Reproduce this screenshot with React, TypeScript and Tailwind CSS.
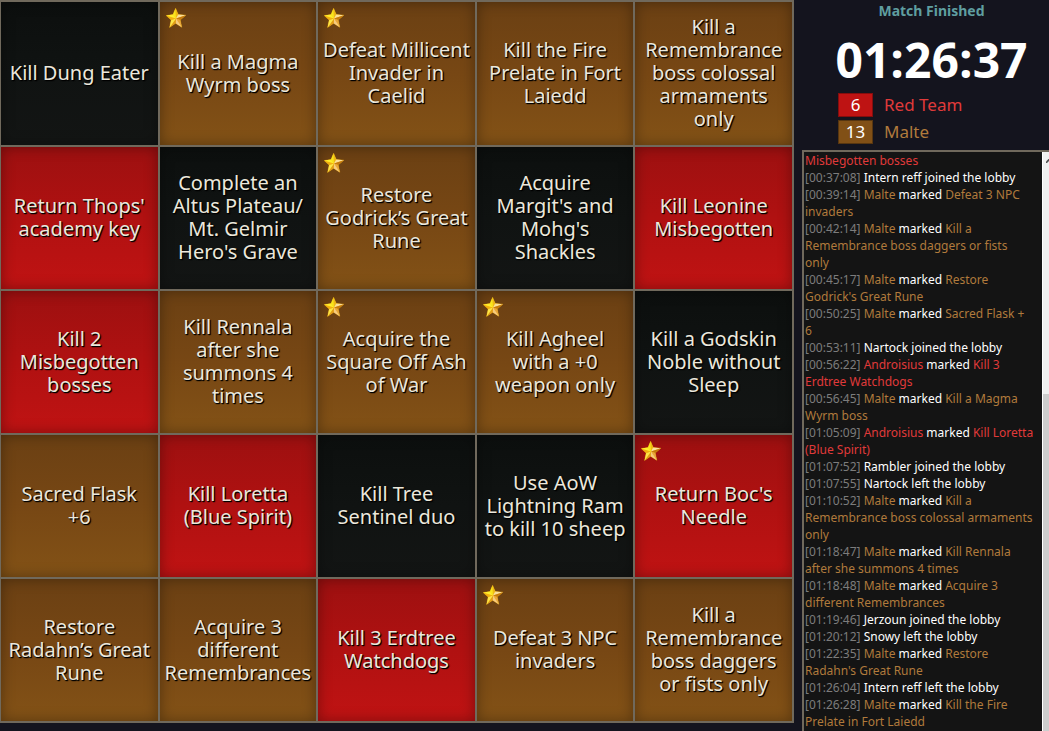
import React, { Fragment } from "react";

type Color = "red" | "brown" | "none";

interface Goal {
  text: string;
  color: Color;
  starred?: boolean;
}

const goals: Goal[] = [
  { text: "Kill Dung Eater", color: "none" },
  { text: "Kill a Magma\nWyrm boss", color: "brown", starred: true },
  { text: "Defeat Millicent\nInvader in\nCaelid", color: "brown", starred: true },
  { text: "Kill the Fire\nPrelate in Fort\nLaiedd", color: "brown" },
  { text: "Kill a\nRemembrance\nboss colossal\narmaments\nonly", color: "brown" },
  { text: "Return Thops'\nacademy key", color: "red" },
  { text: "Complete an\nAltus Plateau/\nMt. Gelmir\nHero's Grave", color: "none" },
  { text: "Restore\nGodrick’s Great\nRune", color: "brown", starred: true },
  { text: "Acquire\nMargit's and\nMohg's\nShackles", color: "none" },
  { text: "Kill Leonine\nMisbegotten", color: "red" },
  { text: "Kill 2\nMisbegotten\nbosses", color: "red" },
  { text: "Kill Rennala\nafter she\nsummons 4\ntimes", color: "brown" },
  { text: "Acquire the\nSquare Off Ash\nof War", color: "brown", starred: true },
  { text: "Kill Agheel\nwith a +0\nweapon only", color: "brown", starred: true },
  { text: "Kill a Godskin\nNoble without\nSleep", color: "none" },
  { text: "Sacred Flask\n+6", color: "brown" },
  { text: "Kill Loretta\n(Blue Spirit)", color: "red" },
  { text: "Kill Tree\nSentinel duo", color: "none" },
  { text: "Use AoW\nLightning Ram\nto kill 10 sheep", color: "none" },
  { text: "Return Boc's\nNeedle", color: "red", starred: true },
  { text: "Restore\nRadahn’s Great\nRune", color: "brown" },
  { text: "Acquire 3\ndifferent\nRemembrances", color: "brown" },
  { text: "Kill 3 Erdtree\nWatchdogs", color: "red" },
  { text: "Defeat 3 NPC\ninvaders", color: "brown", starred: true },
  { text: "Kill a\nRemembrance\nboss daggers\nor fists only", color: "brown" },
];

const cellColors: Record<Color, string> = {
  red: "from-[#9d1010] via-[#b01111] to-[#c01313]",
  brown: "from-[#6b4013] via-[#774714] to-[#835216]",
  none: "from-[#0c0f0e] via-[#101312] to-[#131514]",
};

const textColors: Record<Color, string> = {
  red: "text-[#e03a3a]",
  brown: "text-[#b07a3c]",
  none: "text-white",
};

interface LogEntry {
  time?: string;
  player?: string;
  color: Color;
  action?: string;
  goal?: string;
}

const log: LogEntry[] = [
  { color: "red", goal: "Misbegotten bosses" },
  { time: "00:37:08", color: "none", action: "Intern reff joined the lobby" },
  { time: "00:39:14", player: "Malte", color: "brown", goal: "Defeat 3 NPC\ninvaders" },
  { time: "00:42:14", player: "Malte", color: "brown", goal: "Kill a\nRemembrance boss daggers or fists\nonly" },
  { time: "00:45:17", player: "Malte", color: "brown", goal: "Restore\nGodrick's Great Rune" },
  { time: "00:50:25", player: "Malte", color: "brown", goal: "Sacred Flask +\n6" },
  { time: "00:53:11", color: "none", action: "Nartock joined the lobby" },
  { time: "00:56:22", player: "Androisius", color: "red", goal: "Kill 3\nErdtree Watchdogs" },
  { time: "00:56:45", player: "Malte", color: "brown", goal: "Kill a Magma\nWyrm boss" },
  { time: "01:05:09", player: "Androisius", color: "red", goal: "Kill Loretta\n(Blue Spirit)" },
  { time: "01:07:52", color: "none", action: "Rambler joined the lobby" },
  { time: "01:07:55", color: "none", action: "Nartock left the lobby" },
  { time: "01:10:52", player: "Malte", color: "brown", goal: "Kill a\nRemembrance boss colossal armaments\nonly" },
  { time: "01:18:47", player: "Malte", color: "brown", goal: "Kill Rennala\nafter she summons 4 times" },
  { time: "01:18:48", player: "Malte", color: "brown", goal: "Acquire 3\ndifferent Remembrances" },
  { time: "01:19:46", color: "none", action: "Jerzoun joined the lobby" },
  { time: "01:20:12", color: "none", action: "Snowy left the lobby" },
  { time: "01:22:35", player: "Malte", color: "brown", goal: "Restore\nRadahn's Great Rune" },
  { time: "01:26:04", color: "none", action: "Intern reff left the lobby" },
  { time: "01:26:28", player: "Malte", color: "brown", goal: "Kill the Fire\nPrelate in Fort Laiedd" },
];

function Star() {
  return (
    <svg viewBox="0 0 20 20" className="absolute left-1.5 top-1.5 size-5" aria-label="Starred" role="img">
      <polygon points="9.6,0.3 12.2,6.4 19.8,7.2 14.2,11.9 15.8,19.3 9.6,15.3 3.6,19.4 5.2,12 0.2,7.6 7,6.6" fill="#f0b818" stroke="#d99a10" strokeWidth="0.5" strokeLinejoin="round" />
      <polygon points="9.6,0.3 7,6.6 10,10.6" fill="#f9e61c" />
      <polygon points="9.6,0.3 12.2,6.4 10,10.6" fill="#efb914" />
      <polygon points="19.8,7.2 12.2,6.4 10,10.6" fill="#fbdf9a" />
      <polygon points="19.8,7.2 14.2,11.9 10,10.6" fill="#c5780f" />
      <polygon points="15.8,19.3 14.2,11.9 10,10.6" fill="#e8a53c" />
      <polygon points="15.8,19.3 9.6,15.3 10,10.6" fill="#f7cb80" />
      <polygon points="3.6,19.4 9.6,15.3 10,10.6" fill="#e09c18" />
      <polygon points="3.6,19.4 5.2,12 10,10.6" fill="#fde648" />
      <polygon points="0.2,7.6 5.2,12 10,10.6" fill="#f2b010" />
      <polygon points="0.2,7.6 7,6.6 10,10.6" fill="#ffee2a" />
    </svg>
  );
}

function Cell({ goal }: { goal: Goal }) {
  return (
    <button
      type="button"
      className={`relative flex items-center justify-center whitespace-pre bg-linear-to-b pb-0.5 text-center text-xl leading-[23px] text-[#ece8dc] shadow-[inset_0_0_14px_rgba(0,0,0,0.35)] [text-shadow:1px_1px_1px_#000,1px_1px_1px_#000] ${cellColors[goal.color]}`}
    >
      {goal.starred && <Star />}
      <span>{goal.text}</span>
    </button>
  );
}

function Score({ name, score, color, badge }: { name: string; score: number; color: Color; badge: string }) {
  return (
    <li className="flex items-center gap-[11px]">
      <span className={`flex h-6 w-[35px] items-center justify-center border text-[17px] text-white ${badge}`}>{score}</span>
      <span className={`text-[17px] leading-6 ${textColors[color]}`}>{name}</span>
    </li>
  );
}

function LogLine({ entry }: { entry: LogEntry }) {
  return (
    <li>
      {entry.time && <span className="text-[#7c7c7c]">[{entry.time}] </span>}
      {entry.action && <span className="text-white">{entry.action}</span>}
      {entry.player && (
        <>
          <span className={textColors[entry.color]}>{entry.player}</span>
          <span className="text-white"> marked </span>
        </>
      )}
      {entry.goal?.split("\n").map((line, i) => (
        <Fragment key={i}>
          {i > 0 && <br />}
          <span className={textColors[entry.color]}>{line}</span>
        </Fragment>
      ))}
    </li>
  );
}

export default function App() {
  return (
    <div className="grid min-h-screen grid-cols-[minmax(0,1fr)_247px] gap-2 bg-[#14141e] font-['Noto_Sans',sans-serif]">
      <main className="grid grid-cols-5 grid-rows-[minmax(143px,auto)_repeat(4,minmax(142px,auto))] gap-0.5 self-start bg-[#70695c] py-0.5 pl-px pr-0.5">
        {goals.map((goal) => (
          <Cell key={goal.text} goal={goal} />
        ))}
      </main>

      <aside className="flex flex-col">
        <header>
          <h1 className="pl-3 pt-px text-center text-sm font-bold leading-5 text-[#5f9ea0]">Match Finished</h1>
          <p className="mt-3 pl-3 text-center font-['Open_Sans',sans-serif] text-5xl font-bold leading-[54px] text-white">01:26:37</p>
          <ul className="mt-1.5 flex flex-col gap-[3px] pb-1.5 pl-9">
            <Score name="Red Team" score={6} color="red" badge="border-[#840d0d] bg-[#be1313]" />
            <Score name="Malte" score={13} color="brown" badge="border-[#573610] bg-[#815016]" />
          </ul>
        </header>

        <section aria-label="Match log" className="flex flex-1 border-l-2 border-t-2 border-[#70695c] bg-[#141414]">
          <ol className="min-w-0 flex-1 whitespace-pre pl-px text-xs leading-[17px]">
            {log.map((entry, i) => (
              <LogLine key={i} entry={entry} />
            ))}
          </ol>
          <div aria-hidden="true" className="flex w-[7px] flex-col border-l border-white bg-[#f0f0f0]">
            <div className="flex h-[17px] items-center justify-end">
              <svg viewBox="0 0 3 4" className="h-1 w-[3px]">
                <path d="M0 4V2.5L2.5 0H3V2L1 4Z" fill="#505050" />
              </svg>
            </div>
            <div className="h-[225px]" />
            <div className="flex-1 bg-[#cdcdcd]" />
          </div>
        </section>
      </aside>
    </div>
  );
}
